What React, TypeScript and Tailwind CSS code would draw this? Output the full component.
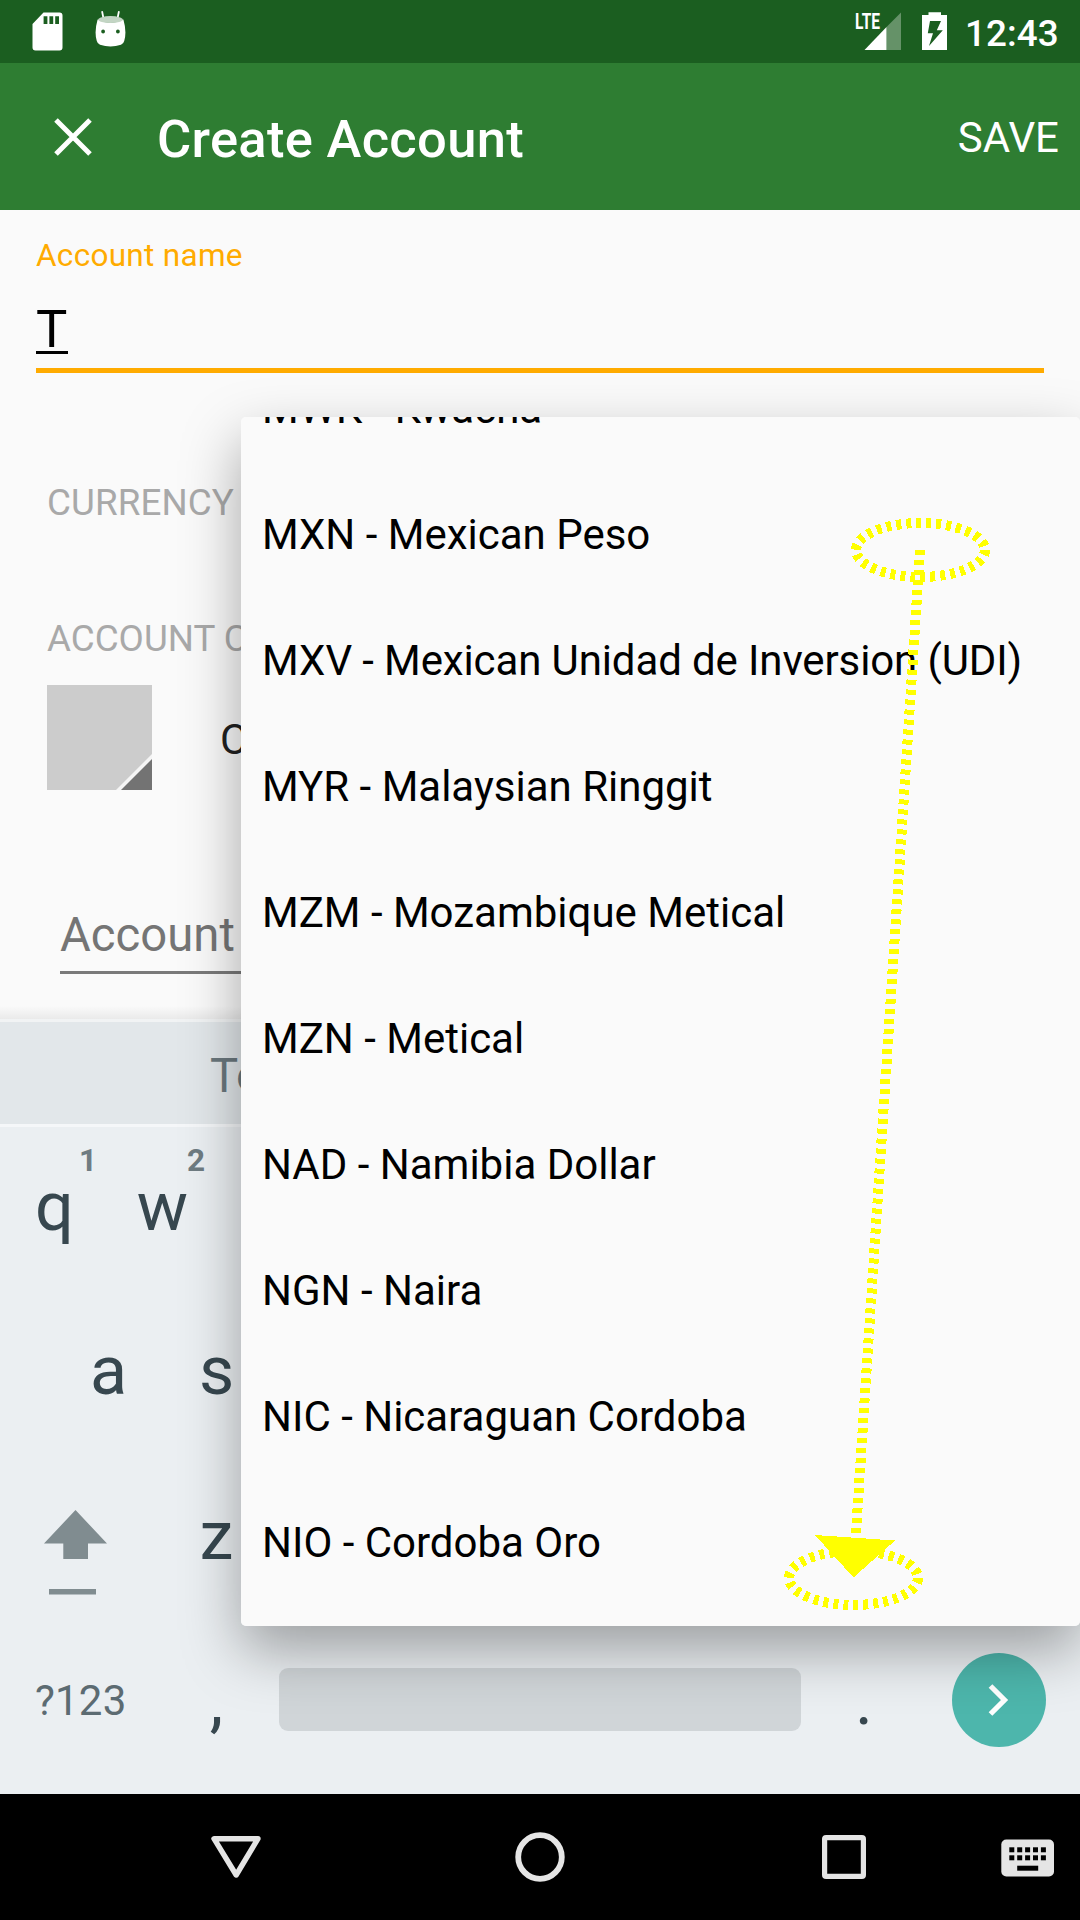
import React from "react";

const currencies = [
  { label: "MWK - Kwacha" },
  { label: "MXN - Mexican Peso" },
  { label: "MXV - Mexican Unidad de Inversion (UDI)", tight: true },
  { label: "MYR - Malaysian Ringgit" },
  { label: "MZM - Mozambique Metical" },
  { label: "MZN - Metical" },
  { label: "NAD - Namibia Dollar" },
  { label: "NGN - Naira" },
  { label: "NIC - Nicaraguan Cordoba" },
  { label: "NIO - Cordoba Oro" },
];

function StatusBar() {
  return (
    <div className="flex h-[63px] items-center bg-[#1b5e20] text-white">
      <svg className="ml-[32px] h-[63px] w-[31px]" viewBox="0 0 31 63">
        <path
          fill="#fff"
          fillRule="evenodd"
          d="M11.5 12.5H27.5Q30.5 12.5 30.5 15.5V47.5Q30.5 50.5 27.5 50.5H3.5Q0.5 50.5 0.5 47.5V24ZM11.6 16.3V24H15.4V16.3ZM17.4 16.3V24H21.2V16.3ZM23.2 16.3V24H27V16.3Z"
        />
      </svg>
      <svg className="ml-[32px] h-[63px] w-[32px]" viewBox="0 0 32 63">
        <path d="M7.2 12L8.6 19M23.8 12L22.4 19" stroke="#fff" strokeWidth="1.8" strokeLinecap="round" />
        <path
          fill="#fff"
          fillRule="evenodd"
          d="M2.6 19.5Q15.5 26 28.4 19.5Q32 32 29.2 41Q28.4 44 26 44.8Q15.5 48 5 44.8Q2.6 44 1.8 41Q-1 32 2.6 19.5ZM6.2 31.5A1.9 1.9 0 1 0 10 31.5A1.9 1.9 0 1 0 6.2 31.5ZM21 31.5A1.9 1.9 0 1 0 24.8 31.5A1.9 1.9 0 1 0 21 31.5Z"
        />
        <ellipse cx="15.5" cy="19.6" rx="12.4" ry="3.5" fill="#c3d5c4" />
      </svg>
      <div className="flex-1" />
      <svg className="h-[63px] w-[46px]" viewBox="0 0 46 63">
        <text
          x="0"
          y="29"
          fill="#fff"
          textLength="25"
          lengthAdjust="spacingAndGlyphs"
          className="font-['Roboto',sans-serif] text-[22px] font-bold"
        >
          LTE
        </text>
        <path d="M46 12.5V50H31.5V27Z" fill="#659268" />
        <path d="M31.5 27V50H9.5Z" fill="#fff" />
      </svg>
      <svg className="ml-[21px] h-[63px] w-[25px]" viewBox="0 0 25 63">
        <path
          fill="#fff"
          fillRule="evenodd"
          d="M6.5 12.3H19V15H25V50H0V15H6.5ZM8 21L5.8 33.3H11L7 46L20.8 30.3H14.8L19 21Z"
        />
      </svg>
      <span className="ml-[18px] mr-[22px] w-[93px] whitespace-nowrap pt-[5px] text-right text-[36.75px] font-medium leading-[42px] tracking-[0.1px]">
        12:43
      </span>
    </div>
  );
}

function AppBar() {
  return (
    <div className="flex h-[147px] items-center bg-[#2e7d32] text-white">
      <svg className="ml-[54px] h-[38px] w-[38px]" viewBox="0 0 38 38">
        <path d="M2 2L36 36M36 2L2 36" stroke="#fff" strokeWidth="5" />
      </svg>
      <span className="ml-[65px] flex-1 pt-[5px] text-[52.5px] font-medium leading-[60px] tracking-[0.3px]">
        Create Account
      </span>
      <span className="pr-[21px] pt-[2px] text-[42px] leading-[48px]">SAVE</span>
    </div>
  );
}

function Form() {
  return (
    <div className="h-[809px] overflow-hidden bg-[#fafafa]">
      <div className="mx-[36px] pt-[25px]">
        <div className="text-[31.5px] leading-[42px] tracking-[0.3px] text-[#ffab00]">Account name</div>
        <div className="mt-[23px] h-[54px] w-[32px] border-b-[3px] border-black text-[52.5px] leading-[58px] text-black">
          T
        </div>
        <div className="mt-[14px] h-[5px] bg-[#ffab00]" />
      </div>
      <div className="ml-[47px] mt-[109px] text-[36.75px] leading-[42px] tracking-[0.1px] text-[#a9a9a9]">
        CURRENCY
      </div>
      <div className="ml-[47px] mt-[94px] text-[36.75px] leading-[42px] text-[#a9a9a9]">ACCOUNT C</div>
      <div className="ml-[47px] mt-[25px] flex h-[105px] items-center">
        <svg className="h-[105px] w-[105px]" viewBox="0 0 105 105">
          <path d="M0 0H105V105H0Z" fill="#cccccc" />
          <path d="M105 69V105H69Z" fill="#f5f5f5" />
          <path d="M105 74V105H74Z" fill="#737373" />
        </svg>
        <span className="ml-[68px] pt-[4px] text-[42px] leading-[48px] text-[#212121]">C</span>
      </div>
      <div className="ml-[60px] mt-[116px] h-[68px] border-b-[3px] border-[#7a7a7a] text-[47.25px] leading-[58px] text-[#757575]">
        Account
      </div>
      <div className="mt-[32px] h-[13px] bg-linear-to-b from-[#fafafa] to-[#eaeaea]" />
    </div>
  );
}

function Key({ label, hint }: { label: string; hint?: string }) {
  return (
    <div className="relative flex h-full w-[108px] items-center justify-center">
      <span className="pl-px">{label}</span>
      {hint && (
        <span className="absolute right-[11px] top-[18px] text-[31.5px] font-bold leading-[32px] text-[#6f7c82]">
          {hint}
        </span>
      )}
    </div>
  );
}

function Keyboard() {
  return (
    <div className="h-[775px] bg-[#ebeff2] text-[68.25px] leading-[60px] text-[#37474f]">
      <div className="h-[3px] bg-[#f1f3f4]" />
      <div className="flex h-[102px] items-center bg-[#e2e7ea] pl-[210px] text-[47.25px] text-[#6a777d]">
        <span className="pt-[5px]">To</span>
      </div>
      <div className="h-[3px] bg-[#f5f7f9]" />
      <div className="flex h-[161px] pb-[2px]">
        <Key label="q" hint="1" />
        <Key label="w" hint="2" />
      </div>
      <div className="flex h-[165px] pl-[54px]">
        <Key label="a" />
        <Key label="s" />
      </div>
      <div className="flex h-[165px]">
        <svg className="h-[165px] w-[162px]" viewBox="0 0 162 165">
          <path d="M75.5 57L107 90.5H88V106H63.3V90.5H44Z" fill="#808c90" />
          <path d="M49 136H96V141.5H49Z" fill="#808c90" />
        </svg>
        <div className="pt-px">
          <Key label="z" />
        </div>
      </div>
      <div className="flex h-[176px] items-start">
        <span className="ml-[35px] mt-[53px] w-[127px] text-[42px] leading-[60px] tracking-[0.2px] text-[#5c6b72]">
          ?123
        </span>
        <span className="mt-[53px] w-[108px] pl-px text-center">,</span>
        <div className="ml-[9px] mt-[50px] h-[63px] w-[522px] rounded-[9px] bg-[#d0d5d8]" />
        <span className="mt-[53px] w-[124px] pl-[2px] text-center">.</span>
        <svg className="ml-[26px] mt-[34px] h-[96px] w-[96px]" viewBox="0 0 96 96">
          <circle cx="48" cy="48" r="47" fill="#4db6ac" />
          <path d="M39.5 34L53.5 48L39.5 62" fill="none" stroke="#fff" strokeWidth="5.2" />
        </svg>
      </div>
    </div>
  );
}

function NavBar() {
  return (
    <div className="flex h-[126px] items-center bg-black">
      <svg className="ml-[210px] h-[52px] w-[52px]" viewBox="0 0 52 52">
        <path d="M4 7.7H48L26.2 44Z" fill="none" stroke="#e5e5e5" strokeWidth="5.4" strokeLinejoin="round" />
      </svg>
      <svg className="ml-[252px] h-[52px] w-[52px]" viewBox="0 0 52 52">
        <circle cx="26" cy="26" r="21.8" fill="none" stroke="#e5e5e5" strokeWidth="5.8" />
      </svg>
      <svg className="ml-[252px] h-[52px] w-[52px]" viewBox="0 0 52 52">
        <rect x="6.6" y="6.6" width="38.8" height="38.8" rx="1.5" fill="none" stroke="#e5e5e5" strokeWidth="5.2" />
      </svg>
      <svg className="ml-[131px] mt-[2px] h-[38px] w-[54px]" viewBox="0 0 54 38">
        <rect x="0.3" y="0.5" width="52.7" height="37" rx="5" fill="#e5e5e5" />
        {[0, 1, 2, 3, 4].map((c) => (
          <g key={c} fill="#000">
            <rect x={8.3 + c * 7.9} y="8.3" width="5" height="5" />
            <rect x={8.3 + c * 7.9} y="16.3" width="5" height="5" />
          </g>
        ))}
        <rect x="16.2" y="26.7" width="21" height="5" fill="#000" />
      </svg>
    </div>
  );
}

function CurrencyPopup() {
  return (
    <div className="absolute left-[241px] top-[417px] h-[1209px] w-[839px] rounded-[5px] shadow-[0_24px_58px_rgba(0,0,0,0.34)]">
      <div className="h-full overflow-hidden rounded-[5px] bg-[#fafafa]">
        <div className="-mt-[72px]">
          {currencies.map((c) => (
            <div
              key={c.label}
              className={
                "flex h-[126px] items-center whitespace-nowrap pl-[21px] text-[42px] text-black " +
                (c.tight ? "tracking-[-0.12px]" : "")
              }
            >
              {c.label}
            </div>
          ))}
        </div>
      </div>
    </div>
  );
}

function SwipeOverlay() {
  return (
    <svg
      className="pointer-events-none absolute left-0 top-0 h-[1920px] w-[1080px]"
      viewBox="0 0 1080 1920"
      shapeRendering="crispEdges"
    >
      <g fill="none" stroke="#ffff00" strokeWidth="10" strokeDasharray="5 5">
        <ellipse cx="920.5" cy="550" rx="64.5" ry="27" />
        <ellipse cx="853.5" cy="1578" rx="64.5" ry="27" />
        <path d="M920 550L855.8 1535" />
      </g>
      <path d="M815 1535L895 1540.5L853.5 1577.5Z" fill="#ffff00" />
    </svg>
  );
}

export default function App() {
  return (
    <div className="relative flex h-[1920px] w-[1080px] flex-col overflow-hidden font-['Roboto',sans-serif]">
      <StatusBar />
      <AppBar />
      <Form />
      <Keyboard />
      <NavBar />
      <CurrencyPopup />
      <SwipeOverlay />
    </div>
  );
}
